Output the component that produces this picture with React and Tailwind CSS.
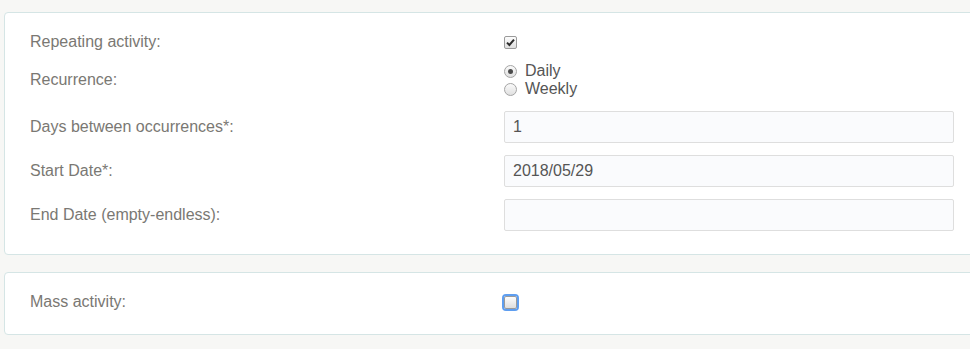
import React from "react";

function Checkbox({ checked, focused }) {
  return (
    <span
      className={
        "inline-flex h-[13px] w-[13px] items-center justify-center rounded-[2px] border border-[#9a9a9a] bg-gradient-to-b from-[#fdfdfd] to-[#dedede] " +
        (focused ? "outline outline-2 outline-[#5e9ef0] outline-offset-0" : "")
      }
    >
      {checked && (
        <svg width="9" height="9" viewBox="0 0 9 9">
          <path d="M1 4.6 L3.4 7 L8 1.6" fill="none" stroke="#2b2b2b" strokeWidth="2" />
        </svg>
      )}
    </span>
  );
}

function Radio({ checked, label }) {
  return (
    <label className="flex h-[18px] items-center gap-[8px]">
      <span className="inline-flex h-[13px] w-[13px] items-center justify-center rounded-full border border-[#a5a5a5] bg-gradient-to-b from-[#fbfbfb] to-[#e0e0e0]">
        {checked && <span className="h-[5px] w-[5px] rounded-full bg-[#4a4a4a]" />}
      </span>
      <span className="text-[16px] leading-[18px] text-[#555]">{label}</span>
    </label>
  );
}

function Label({ children }) {
  return <div className="text-[16px] leading-[18px] text-[#7a7873]">{children}</div>;
}

function TextInput({ value }) {
  return (
    <div className="flex h-[32px] w-[450px] items-center rounded-[2px] border border-[#dedede] bg-[#fafbfd] pl-[8px] text-[16px] text-[#555]">
      {value}
    </div>
  );
}

function Row({ label, children, className = "" }) {
  return (
    <div className={"grid grid-cols-[474px_450px] items-center " + className}>
      <Label>{label}</Label>
      <div className="flex items-center">{children}</div>
    </div>
  );
}

export default function App() {
  return (
    <div
      className="h-[349px] w-[970px] overflow-hidden bg-[#f7f7f5] pt-[12px]"
      style={{ fontFamily: '"Liberation Sans", Arial, sans-serif' }}
    >
      <div className="ml-[4px] w-[990px] rounded-[4px] border border-[#d5e5e5] bg-white px-[25px] pb-[23px] pt-[17px]">
        <Row label="Repeating activity:" className="h-[24px]">
          <Checkbox checked />
        </Row>
        <Row label="Recurrence:" className="mt-[8px] h-[36px]">
          <div className="flex flex-col">
            <Radio checked label="Daily" />
            <Radio label="Weekly" />
          </div>
        </Row>
        <Row label="Days between occurrences*:" className="mt-[13px]">
          <TextInput value="1" />
        </Row>
        <Row label="Start Date*:" className="mt-[12px]">
          <TextInput value="2018/05/29" />
        </Row>
        <Row label="End Date (empty-endless):" className="mt-[12px]">
          <TextInput value="" />
        </Row>
      </div>
      <div className="ml-[4px] mt-[17px] w-[990px] rounded-[4px] border border-[#d5e5e5] bg-white px-[25px] pb-[20px] pt-[17px]">
        <Row label="Mass activity:" className="h-[24px]">
          <Checkbox focused />
        </Row>
      </div>
    </div>
  );
}
